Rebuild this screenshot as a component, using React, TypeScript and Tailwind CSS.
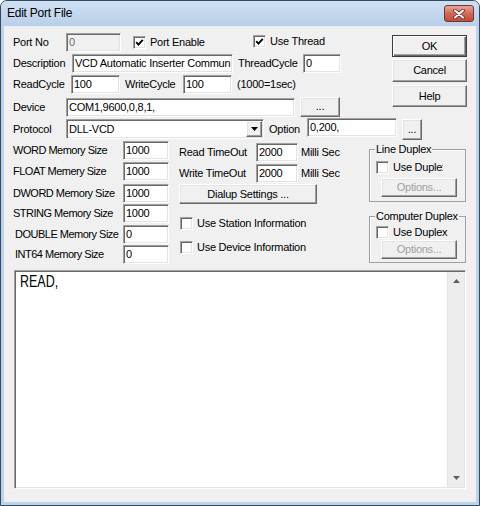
import React from 'react'

const sunken =
  'border border-t-[#a0a0a0] border-l-[#a0a0a0] border-r-white border-b-white shadow-[inset_1px_1px_0_#696969,inset_-1px_-1px_0_#e3e3e3]'
const raised =
  'border border-t-white border-l-white border-r-[#696969] border-b-[#696969] shadow-[inset_-1px_-1px_0_#a0a0a0,inset_1px_1px_0_#e3e3e3]'

function Edit({ className = '', value = '', disabled = false }: { className?: string; value?: string; disabled?: boolean }) {
  return (
    <div
      className={`${sunken} ${disabled ? 'bg-[#f0f0f0] text-[#6d6d6d]' : 'bg-white'} h-[19px] shrink-0 flex items-center pl-[2px] overflow-hidden whitespace-nowrap ${className}`}
    >
      {value}
    </div>
  )
}

function Button({
  className = '',
  children,
  disabled = false,
  primary = false,
}: {
  className?: string
  children: React.ReactNode
  disabled?: boolean
  primary?: boolean
}) {
  const frame = primary
    ? 'border border-[#3c3c3c] shadow-[inset_1px_1px_0_white,inset_-1px_-1px_0_#696969,inset_-2px_-2px_0_#a0a0a0]'
    : raised
  return (
    <div
      className={`${frame} bg-[#f0f0f0] shrink-0 flex items-center justify-center whitespace-nowrap ${disabled ? 'text-[#a0a0a0]' : ''} ${className}`}
    >
      {children}
    </div>
  )
}

function Check({ label, checked = false, className = '', labelClass = '' }: { label: string; checked?: boolean; className?: string; labelClass?: string }) {
  return (
    <div className={`flex items-center whitespace-nowrap shrink-0 ${className}`}>
      <span className={`${sunken} bg-white w-[13px] h-[13px] shrink-0 flex items-center justify-center`}>
        {checked && (
          <svg width="9" height="9" viewBox="0 0 9 9">
            <polyline points="1.2,4.2 3.4,6.6 7.8,1.8" fill="none" stroke="#000" strokeWidth="1.9" />
          </svg>
        )}
      </span>
      <span className={`ml-[4px] ${labelClass}`}>{label}</span>
    </div>
  )
}

function Arrow({ up }: { up?: boolean }) {
  return (
    <svg width="7" height="4" viewBox="0 0 7 4">
      <polygon points={up ? '3.5,0 7,4 0,4' : '0,0 7,0 3.5,4'} fill="#606060" />
    </svg>
  )
}

function TitleBar() {
  return (
    <div className="h-[25px] shrink-0 flex items-center justify-between pl-[6px] pr-[5px] bg-gradient-to-b from-[#cfe0f3] to-[#b9cfe9]">
      <span className="text-[12px] text-black">Edit Port File</span>
      <div className="w-[30px] h-[17px] rounded-[3px] border border-[#6e3a33] bg-gradient-to-b from-[#e8a596] via-[#d06a58] to-[#c4493a] flex items-center justify-center">
        <svg width="12" height="10" viewBox="0 0 12 10">
          <path d="M2 1.5 L10 8.5 M10 1.5 L2 8.5" stroke="#5a2a24" strokeWidth="3.6" strokeLinecap="round" />
          <path d="M2 1.5 L10 8.5 M10 1.5 L2 8.5" stroke="#ffffff" strokeWidth="2" strokeLinecap="round" />
        </svg>
      </div>
    </div>
  )
}

function Group({ title, className = '', children }: { title: string; className?: string; children: React.ReactNode }) {
  return (
    <div className={`relative border border-[#a0a0a0] shadow-[inset_1px_1px_0_white] ${className}`}>
      <span className="absolute left-[5px] top-[-7px] bg-[#f0f0f0] px-[1px] leading-[13px] whitespace-nowrap">{title}</span>
      {children}
    </div>
  )
}

function MemRow({ label, value, className = '', indent = false }: { label: string; value: string; className?: string; indent?: boolean }) {
  return (
    <div className={`flex items-center h-[19px] ${className}`}>
      <span className={`w-[110px] whitespace-nowrap tracking-[-0.5px] ${indent ? 'pl-[2px]' : ''}`}>{label}</span>
      <Edit className="w-[46px]" value={value} />
    </div>
  )
}

export default function App() {
  return (
    <div className="w-[480px] h-[506px] flex flex-col bg-[#bcd3ec] border border-[#34495e] rounded-t-[7px] overflow-hidden font-['Liberation_Sans',Arial,sans-serif] text-[11px] leading-[13px] tracking-[-0.25px] text-black">
      <TitleBar />
      <div className="flex-1 mx-[3px] mb-[3px] bg-[#f0f0f0] flex flex-col pl-[9px]">
        {/* top block: fields and OK / Cancel / Help */}
        <div className="flex mt-[7px]">
          <div className="w-[379px] flex flex-col">
            <div className="flex items-center h-[19px]">
              <span className="w-[53px]">Port No</span>
              <Edit className="w-[55px]" value="0" disabled />
              <Check className="ml-[12px] w-[120px]" label="Port Enable" checked />
              <Check className="self-start mt-[2px]" label="Use Thread" checked />
            </div>
            <div className="flex items-center h-[19px] mt-[2px]">
              <span className="w-[59px]">Description</span>
              <Edit className="w-[161px]" value="VCD Automatic Inserter Commun" />
              <span className="ml-[5px] w-[65px] whitespace-nowrap">ThreadCycle</span>
              <Edit className="w-[38px]" value="0" />
            </div>
            <div className="flex items-center h-[19px] mt-[2px]">
              <span className="w-[58px]">ReadCycle</span>
              <Edit className="w-[49px]" value="100" />
              <span className="ml-[5px] w-[58px]">WriteCycle</span>
              <Edit className="w-[49px]" value="100" />
              <span className="ml-[5px]">(1000=1sec)</span>
            </div>
            <div className="flex items-center h-[20px] mt-[3px]">
              <span className="w-[53px]">Device</span>
              <Edit className="w-[229px]" value="COM1,9600,0,8,1," />
              <Button className="ml-[5px] w-[40px] h-[20px] items-end pb-[3px]">...</Button>
            </div>
          </div>
          <div className="w-[75px] flex flex-col">
            <Button primary className="mt-[2px] h-[22px]">OK</Button>
            <Button className="mt-[2px] h-[23px]">Cancel</Button>
            <Button className="mt-[3px] h-[22px]">Help</Button>
          </div>
        </div>

        {/* protocol row */}
        <div className="flex items-start h-[22px] mt-[1px]">
          <span className="w-[53px] self-center">Protocol</span>
          <div className={`${sunken} bg-white w-[198px] h-[20px] mt-[1px] flex items-center shrink-0`}>
            <span className="flex-1 pl-[2px]">DLL-VCD</span>
            <div className={`${raised} bg-[#f0f0f0] w-[16px] h-[16px] mr-[1px] flex items-center justify-center`}>
              <svg width="7" height="4" viewBox="0 0 7 4">
                <polygon points="0,0 7,0 3.5,4" fill="#000" />
              </svg>
            </div>
          </div>
          <span className="ml-[5px] w-[38px] self-center">Option</span>
          <Edit className="w-[90px]" value="0,200," />
          <Button className="ml-[5px] w-[20px] h-[21px] mt-[1px] items-end pb-[3px]">...</Button>
        </div>

        {/* memory, timeouts, duplex groups */}
        <div className="flex">
          <div className="flex flex-col">
            <MemRow className="mt-[1px]" label="WORD Memory Size" value="1000" />
            <MemRow className="mt-[2px]" label="FLOAT Memery Size" value="1000" />
            <MemRow className="mt-[3px]" label="DWORD Memory Size" value="1000" />
            <MemRow className="mt-[1px]" label="STRING Memory Size" value="1000" />
            <MemRow className="mt-[2px]" label="DOUBLE Memory Size" value="0" indent />
            <MemRow className="mt-[1px]" label="INT64 Memory Size" value="0" indent />
          </div>
          <div className="ml-[10px] w-[190px] flex flex-col">
            <div className="flex items-center h-[19px] mt-[3px]">
              <span className="w-[77px] whitespace-nowrap">Read TimeOut</span>
              <Edit className="w-[42px]" value="2000" />
              <span className="ml-[3px] whitespace-nowrap">Milli Sec</span>
            </div>
            <div className="flex items-center h-[19px] mt-[2px]">
              <span className="w-[77px] whitespace-nowrap">Write TimeOut</span>
              <Edit className="w-[42px]" value="2000" />
              <span className="ml-[3px] whitespace-nowrap">Milli Sec</span>
            </div>
            <Button className="w-[138px] h-[20px] mt-[1px]">Dialup Settings ...</Button>
            <Check className="mt-[13px] ml-[1px]" label="Use Station Information" />
            <Check className="mt-[11px] ml-[1px]" label="Use Device Information" />
          </div>
          <div className="w-[97px] flex flex-col">
            <Group title="Line Duplex" className="mt-[9px] h-[53px] pl-[6px] pt-[11px]">
              <Check label="Use Duplex" labelClass="w-[50px] overflow-hidden" />
              <Button disabled className="mt-[4px] ml-[5px] w-[76px] h-[19px]">Options...</Button>
            </Group>
            <Group title="Computer Duplex" className="mt-[14px] h-[47px] pl-[6px] pt-[9px]">
              <Check label="Use Duplex" />
              <Button disabled className="mt-[1px] ml-[5px] w-[76px] h-[19px]">Options...</Button>
            </Group>
          </div>
        </div>

        {/* script text area */}
        <div className={`${sunken} bg-white ml-[1px] mt-[6px] w-[452px] h-[219px] flex`}>
          <div className="flex-1 pl-[5px] pt-[1px] overflow-hidden">
            <span className="inline-block origin-left scale-x-[0.78] font-['Liberation_Sans',sans-serif] text-[16px] leading-[19px] tracking-normal">READ,</span>
          </div>
          <div className="w-[17px] mr-[1px] my-[1px] bg-[#ededed] border-l border-[#e4e4e4] flex flex-col items-center justify-between py-[7px]">
            <Arrow up />
            <Arrow />
          </div>
        </div>
      </div>
    </div>
  )
}
